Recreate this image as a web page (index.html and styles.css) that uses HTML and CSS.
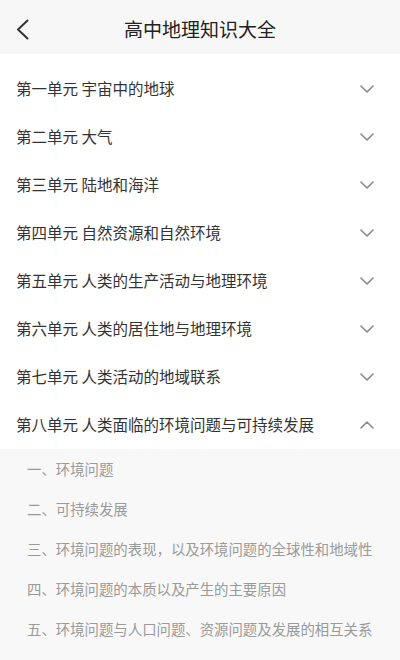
FILE: index.html
```html
<!DOCTYPE html>
<html lang="zh">
<head>
<meta charset="utf-8">
<link rel="stylesheet" href="styles.css">
</head>
<body>
<div class="app">
  <header class="nav">
    <svg class="back" width="13" height="21" viewBox="0 0 13 21"><polyline points="11.5,1.5 2,10.5 11.5,19.5" fill="none" stroke="#333" stroke-width="2" stroke-linecap="round" stroke-linejoin="round"/></svg>
    <h1 class="title">高中地理知识大全</h1>
  </header>
  <main class="list">
    <div class="row"><span class="label">第一单元 宇宙中的地球</span><svg class="chev" width="14" height="8" viewBox="0 0 14 8"><polyline points="1,1 7,7 13,1" fill="none" stroke="#8a8a8a" stroke-width="1.6" stroke-linecap="round" stroke-linejoin="round"/></svg></div>
    <div class="row"><span class="label">第二单元 大气</span><svg class="chev" width="14" height="8" viewBox="0 0 14 8"><polyline points="1,1 7,7 13,1" fill="none" stroke="#8a8a8a" stroke-width="1.6" stroke-linecap="round" stroke-linejoin="round"/></svg></div>
    <div class="row"><span class="label">第三单元 陆地和海洋</span><svg class="chev" width="14" height="8" viewBox="0 0 14 8"><polyline points="1,1 7,7 13,1" fill="none" stroke="#8a8a8a" stroke-width="1.6" stroke-linecap="round" stroke-linejoin="round"/></svg></div>
    <div class="row"><span class="label">第四单元 自然资源和自然环境</span><svg class="chev" width="14" height="8" viewBox="0 0 14 8"><polyline points="1,1 7,7 13,1" fill="none" stroke="#8a8a8a" stroke-width="1.6" stroke-linecap="round" stroke-linejoin="round"/></svg></div>
    <div class="row"><span class="label">第五单元 人类的生产活动与地理环境</span><svg class="chev" width="14" height="8" viewBox="0 0 14 8"><polyline points="1,1 7,7 13,1" fill="none" stroke="#8a8a8a" stroke-width="1.6" stroke-linecap="round" stroke-linejoin="round"/></svg></div>
    <div class="row"><span class="label">第六单元 人类的居住地与地理环境</span><svg class="chev" width="14" height="8" viewBox="0 0 14 8"><polyline points="1,1 7,7 13,1" fill="none" stroke="#8a8a8a" stroke-width="1.6" stroke-linecap="round" stroke-linejoin="round"/></svg></div>
    <div class="row"><span class="label">第七单元 人类活动的地域联系</span><svg class="chev" width="14" height="8" viewBox="0 0 14 8"><polyline points="1,1 7,7 13,1" fill="none" stroke="#8a8a8a" stroke-width="1.6" stroke-linecap="round" stroke-linejoin="round"/></svg></div>
    <div class="row"><span class="label">第八单元 人类面临的环境问题与可持续发展</span><svg class="chev" width="14" height="8" viewBox="0 0 14 8"><polyline points="1,7 7,1 13,7" fill="none" stroke="#8a8a8a" stroke-width="1.6" stroke-linecap="round" stroke-linejoin="round"/></svg></div>
    <div class="sub">
      <div class="sub-row">一、环境问题</div>
      <div class="sub-row">二、可持续发展</div>
      <div class="sub-row">三、环境问题的表现，以及环境问题的全球性和地域性</div>
      <div class="sub-row">四、环境问题的本质以及产生的主要原因</div>
      <div class="sub-row">五、环境问题与人口问题、资源问题及发展的相互关系</div>
    </div>
  </main>
</div>
</body>
</html>
```

FILE: styles.css
```css
html, body {
  margin: 0;
  padding: 0;
  background: #ffffff;
}
body {
  font-family: "Noto Sans CJK SC", "Noto Sans", sans-serif;
  color: #333333;
}
.app {
  width: 400px;
  height: 660px;
  overflow: hidden;
  display: flex;
  flex-direction: column;
}
.nav {
  flex: none;
  height: 54px;
  background: #f7f7f7;
  display: flex;
  align-items: center;
  justify-content: center;
  position: relative;
}
.back {
  position: absolute;
  left: 16px;
  top: 19px;
}
.title {
  margin: 0;
  font-size: 19px;
  font-weight: 400;
  color: #222;
  line-height: 1;
  padding-top: 2px;
}
.list {
  flex: 1;
  display: flex;
  flex-direction: column;
  padding-top: 11px;
}
.row {
  flex: none;
  height: 48px;
  display: flex;
  align-items: center;
  justify-content: space-between;
  padding: 0 26px 0 16px;
}
.label {
  font-size: 15.5px;
  color: #333;
  line-height: 1;
}
.chev {
  display: block;
}
.sub {
  flex: 1;
  background: #f8f8f8;
}
.sub-row {
  height: 40px;
  display: flex;
  align-items: center;
  padding-left: 27px;
  font-size: 14.4px;
  color: #9a9a9a;
  line-height: 1;
}
```
